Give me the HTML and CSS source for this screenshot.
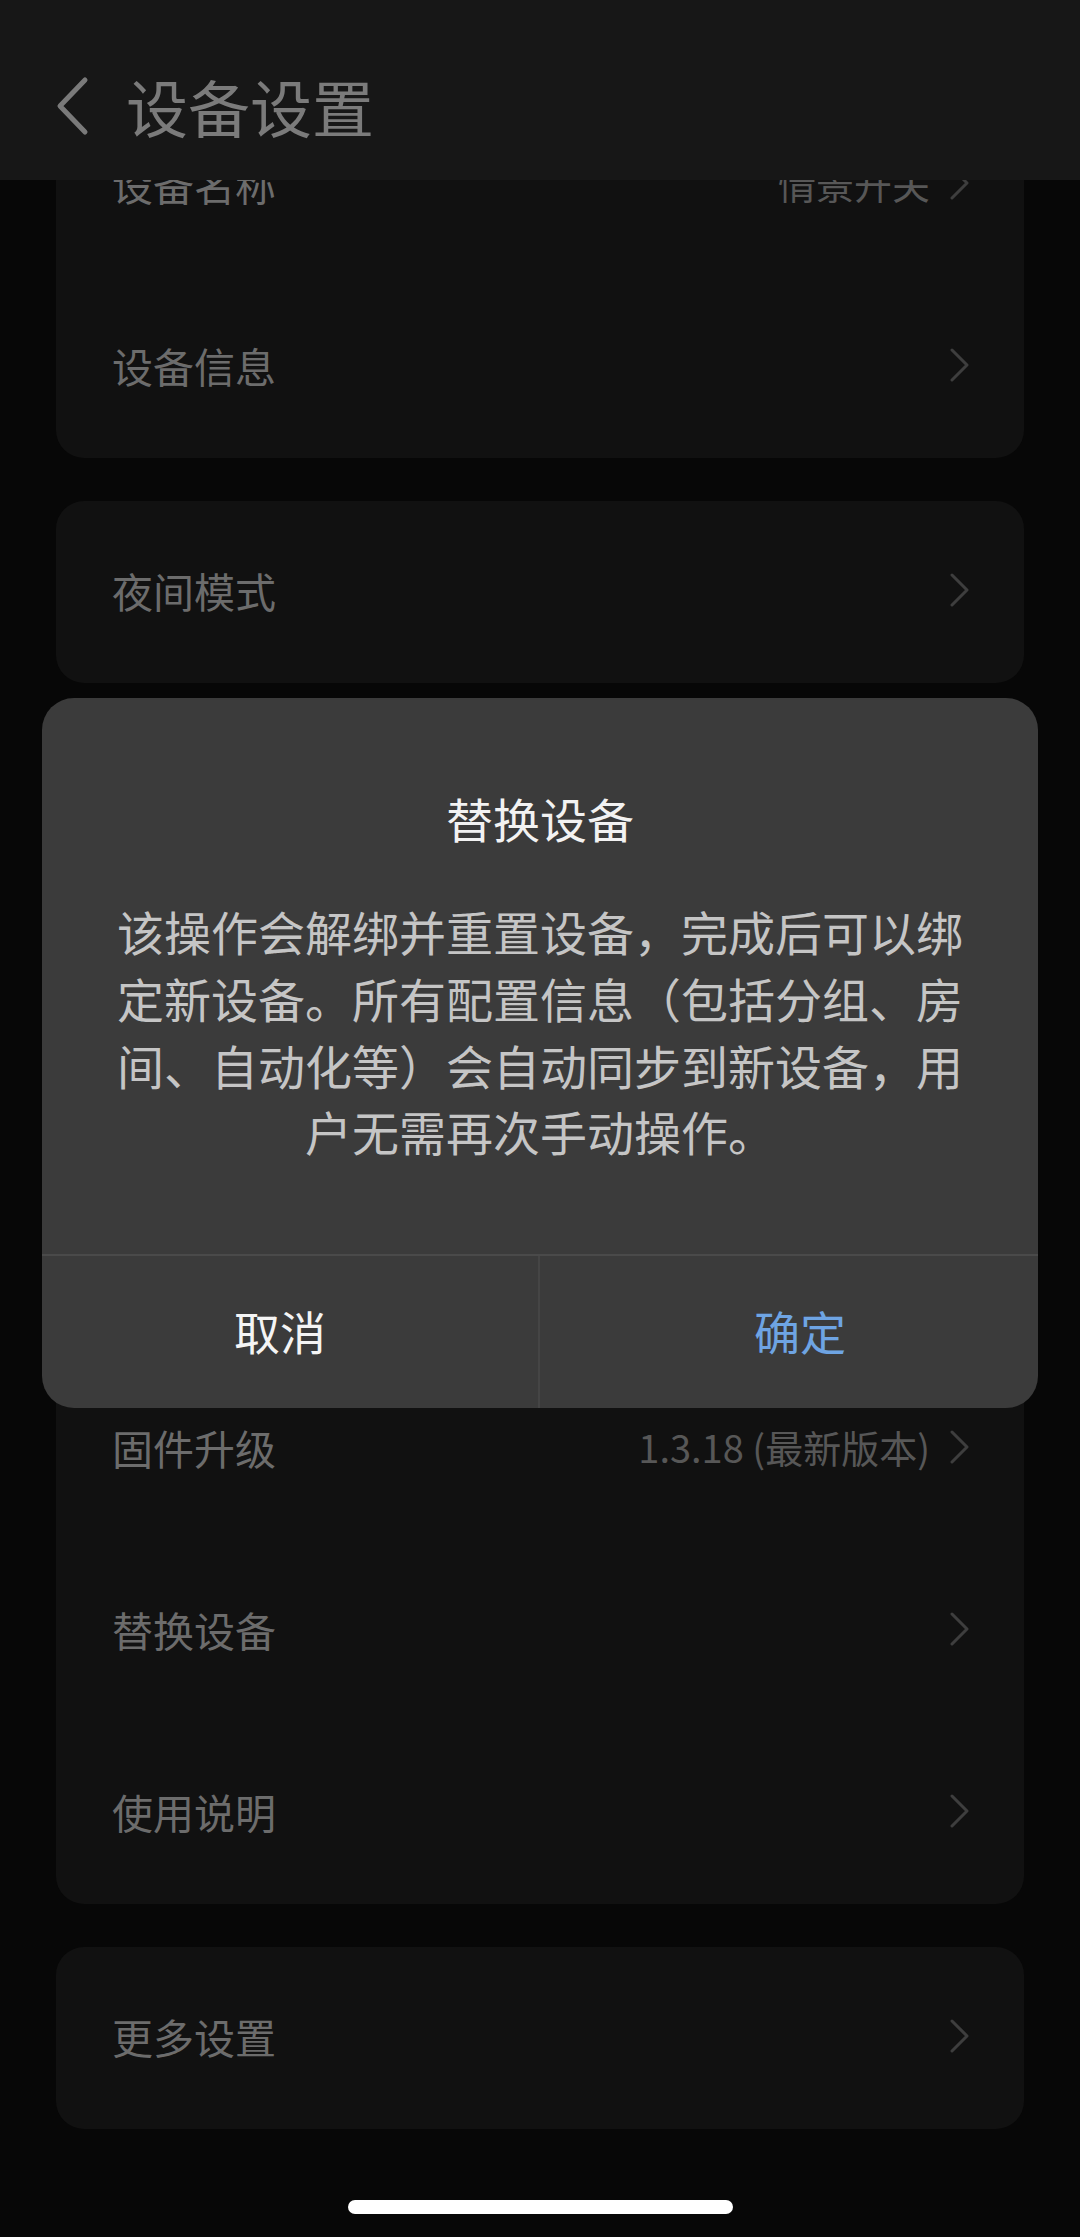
FILE: index.html
```html
<!DOCTYPE html>
<html lang="zh-CN">
<head>
<meta charset="utf-8">
<title>设备设置</title>
<link rel="stylesheet" href="styles.css">
</head>
<body>
<header class="topbar">
  <svg class="back" width="36" height="60" viewBox="0 0 36 60"><polyline points="31,4 6,30 31,56" fill="none" stroke="#7a7a7a" stroke-width="5" stroke-linecap="round" stroke-linejoin="round"/></svg>
  <h1 class="title">设备设置</h1>
</header>

<main class="content">
  <section class="card">
    <div class="row"><span class="label">设备名称</span><span class="right"><span class="value">情景开关</span><svg class="chev" width="20" height="34" viewBox="0 0 20 34"><polyline points="2,2 17,17 2,32" fill="none" stroke="#3e3e3e" stroke-width="3" stroke-linecap="round" stroke-linejoin="round"/></svg></span></div>
    <div class="row"><span class="label">设备信息</span><span class="right"><svg class="chev" width="20" height="34" viewBox="0 0 20 34"><polyline points="2,2 17,17 2,32" fill="none" stroke="#3e3e3e" stroke-width="3" stroke-linecap="round" stroke-linejoin="round"/></svg></span></div>
  </section>

  <section class="card">
    <div class="row"><span class="label">夜间模式</span><span class="right"><svg class="chev" width="20" height="34" viewBox="0 0 20 34"><polyline points="2,2 17,17 2,32" fill="none" stroke="#3e3e3e" stroke-width="3" stroke-linecap="round" stroke-linejoin="round"/></svg></span></div>
  </section>

  <section class="card">
    <div class="row"></div>
  </section>

  <section class="card">
    <div class="row"></div>
    <div class="row"></div>
  </section>

  <section class="card">
    <div class="row"><span class="label">固件升级</span><span class="right"><span class="value">1.3.18 (最新版本)</span><svg class="chev" width="20" height="34" viewBox="0 0 20 34"><polyline points="2,2 17,17 2,32" fill="none" stroke="#3e3e3e" stroke-width="3" stroke-linecap="round" stroke-linejoin="round"/></svg></span></div>
    <div class="row"><span class="label">替换设备</span><span class="right"><svg class="chev" width="20" height="34" viewBox="0 0 20 34"><polyline points="2,2 17,17 2,32" fill="none" stroke="#3e3e3e" stroke-width="3" stroke-linecap="round" stroke-linejoin="round"/></svg></span></div>
    <div class="row"><span class="label">使用说明</span><span class="right"><svg class="chev" width="20" height="34" viewBox="0 0 20 34"><polyline points="2,2 17,17 2,32" fill="none" stroke="#3e3e3e" stroke-width="3" stroke-linecap="round" stroke-linejoin="round"/></svg></span></div>
  </section>

  <section class="card">
    <div class="row"><span class="label">更多设置</span><span class="right"><svg class="chev" width="20" height="34" viewBox="0 0 20 34"><polyline points="2,2 17,17 2,32" fill="none" stroke="#3e3e3e" stroke-width="3" stroke-linecap="round" stroke-linejoin="round"/></svg></span></div>
  </section>
</main>

<div class="mask">
  <div class="dialog">
    <div class="dialog-title">替换设备</div>
    <p class="dialog-text">该操作会解绑并重置设备，完成后可以绑定新设备。所有配置信息（包括分组、房间、自动化等）会自动同步到新设备，用户无需再次手动操作。</p>
    <div class="dialog-actions">
      <div class="btn btn-cancel">取消</div>
      <div class="btn btn-ok">确定</div>
    </div>
  </div>
</div>

<div class="home-indicator"></div>
</body>
</html>
```

FILE: styles.css
```css
* { box-sizing: border-box; }

html, body {
  margin: 0;
  padding: 0;
  background: #070707;
  font-family: "Noto Sans CJK SC", "Noto Sans", sans-serif;
}

body {
  width: 1080px;
  height: 2237px;
  overflow: hidden;
  position: relative;
}

.topbar {
  position: absolute;
  top: 0;
  left: 0;
  width: 1080px;
  height: 180px;
  background: #171717;
  display: flex;
  align-items: center;
  padding: 32px 0 0 54px;
  z-index: 5;
}

.back {
  display: block;
  flex: none;
}

.title {
  margin: 0 0 0 36px;
  font-size: 62px;
  line-height: 74px;
  font-weight: 400;
  color: #7b7b7b;
  letter-spacing: 0;
}

.content {
  padding: 94px 56px 0 56px;
  display: flex;
  flex-direction: column;
  gap: 43px;
}

.card {
  background: #111111;
  border-radius: 28px;
  display: flex;
  flex-direction: column;
}

.row {
  height: 182px;
  display: flex;
  align-items: center;
  justify-content: space-between;
  padding: 0 54px 4px 56px;
}

.label {
  font-size: 41px;
  line-height: 50px;
  color: #6c6c6c;
}

.right {
  display: flex;
  align-items: center;
  gap: 20px;
}

.value {
  font-size: 38px;
  line-height: 50px;
  color: #575757;
}

.chev {
  display: block;
  flex: none;
}

.mask {
  position: absolute;
  inset: 0;
  display: flex;
  justify-content: center;
  align-items: flex-start;
  padding-top: 698px;
  z-index: 10;
}

.dialog {
  width: 996px;
  height: 710px;
  background: #3b3b3b;
  border-radius: 32px;
  display: flex;
  flex-direction: column;
  align-items: center;
  padding-top: 90px;
  overflow: hidden;
}

.dialog-title {
  font-size: 47px;
  line-height: 60px;
  color: #f2f2f2;
}

.dialog-text {
  width: 852px;
  margin: 50px 0 0 0;
  font-size: 47px;
  line-height: 66.8px;
  color: #c5c5c5;
  text-align: center;
}

.dialog-actions {
  margin-top: auto;
  width: 100%;
  height: 154px;
  border-top: 2px solid #4a4a4a;
  display: flex;
}

.btn {
  flex: 1;
  display: flex;
  align-items: center;
  justify-content: center;
  font-size: 46px;
  line-height: 60px;
  padding-bottom: 4px;
}

.btn-cancel {
  color: #f4f4f4;
  border-right: 2px solid #454545;
  padding-right: 20px;
}

.btn-ok {
  color: #6ea4e3;
  padding-left: 22px;
}

.home-indicator {
  position: absolute;
  left: 348px;
  bottom: 23px;
  width: 385px;
  height: 14px;
  border-radius: 7px;
  background: #ffffff;
  z-index: 20;
}
```
